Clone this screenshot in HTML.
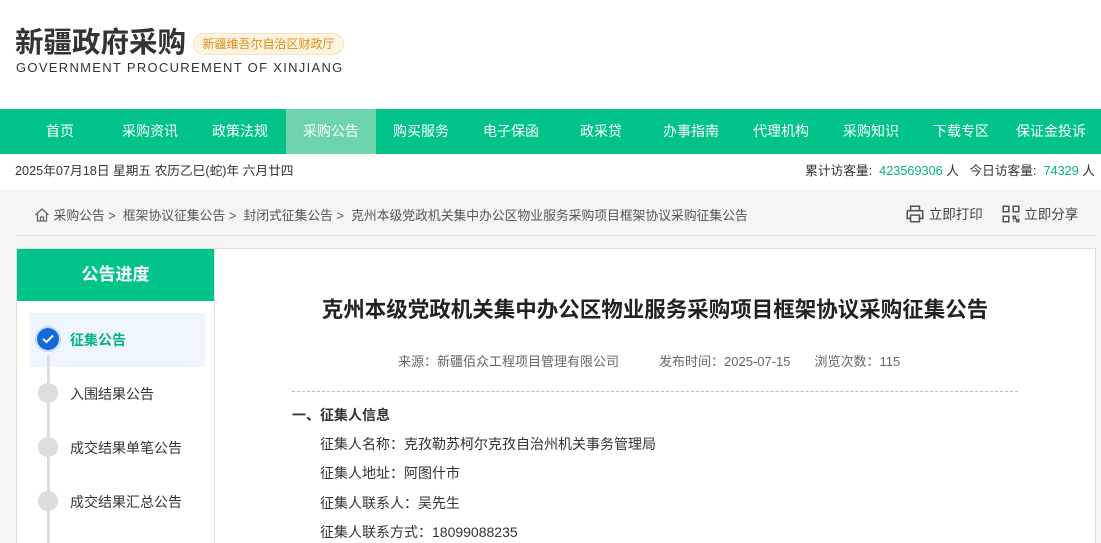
<!DOCTYPE html>
<html style="width:1101px;height:543px;overflow:hidden"><head><meta charset="utf-8"><style>
*{margin:0;padding:0;box-sizing:border-box}
body{width:1101px;height:543px;overflow:hidden;background:#f5f5f5;font-family:"Liberation Sans","Noto Sans CJK SC",sans-serif;color:#333;position:relative}
.abs{position:absolute}
.hdr{left:0;top:0;width:1101px;height:109px;background:#fff}
.nav{left:0;top:109px;width:1101px;height:45px;background:#02c389}
.nav span{position:absolute;top:0;height:45px;line-height:45px;width:90px;text-align:center;color:#fff;font-size:14px}
.date{left:0;top:154px;width:1101px;height:36px;background:#fff;font-size:12.7px;line-height:34px}
.g{color:#02b37e}
</style></head><body>
<div class="abs hdr">
 <div class="abs" style="left:15px;top:28px;font-size:28.5px;line-height:30px;font-weight:bold;color:#333">新疆政府采购</div>
 <div class="abs" style="left:193px;top:33px;width:151px;height:22px;border-radius:11px;background:#fdf3e1;border:1px solid #f6e2bd;color:#e08c18;font-size:12px;line-height:20px;text-align:center">新疆维吾尔自治区财政厅</div>
 <div class="abs" style="left:16px;top:60px;font-size:13px;line-height:15px;letter-spacing:1.3px;color:#333">GOVERNMENT PROCUREMENT OF XINJIANG</div>
</div>
<div class="abs nav">
 <span style="left:15px">首页</span><span style="left:105px">采购资讯</span><span style="left:195px">政策法规</span><span style="left:286px;background:#6ed4ae">采购公告</span><span style="left:376px">购买服务</span><span style="left:466px">电子保函</span><span style="left:556px">政采贷</span><span style="left:646px">办事指南</span><span style="left:736px">代理机构</span><span style="left:826px">采购知识</span><span style="left:916px">下载专区</span><span style="left:1006px">保证金投诉</span>
</div>
<div class="abs date">
 <span class="abs" style="left:15px">2025年07月18日 星期五 农历乙巳(蛇)年 六月廿四</span>
 <span class="abs" style="right:6px">累计访客量: <span class="g">&nbsp;423569306</span> 人 &nbsp;&nbsp;今日访客量: <span class="g">&nbsp;74329</span> 人</span>
</div>
<div class="abs" style="left:34px;top:205px;font-size:12.8px;color:#555">
 <svg width="16" height="16" viewBox="0 0 16 16" style="vertical-align:-3px"><path d="M1.5 8L8 2l6.5 6M3.5 6.5V14h9V6.5M6.5 14v-4h3v4" fill="none" stroke="#666" stroke-width="1.3"/></svg>
 采购公告 &gt; &nbsp;框架协议征集公告 &gt; &nbsp;封闭式征集公告 &gt; &nbsp;克州本级党政机关集中办公区物业服务采购项目框架协议采购征集公告</div>
<div class="abs" style="left:905px;top:203px;font-size:13.5px;color:#444">
 <svg width="20" height="20" viewBox="0 0 18 18" style="vertical-align:-5px"><path d="M5 6V2h8v4M3 6h12a1 1 0 011 1v6h-3M5 13H2V7a1 1 0 011-1M5 10h8v6H5z" fill="none" stroke="#555" stroke-width="1.4"/></svg> 立即打印
 <svg width="20" height="20" viewBox="0 0 18 18" style="vertical-align:-5px;margin-left:14px"><path d="M2 2h5v5H2zM11 2h5v5h-5zM2 11h5v5H2zM11 11h2v2h-2zM14 14h2v2h-2zM11 15h1M15 11h1" fill="none" stroke="#555" stroke-width="1.4"/></svg> 立即分享</div>
<div class="abs" style="left:16px;top:235px;width:1080px;height:1px;background:#ddd"></div>
<div class="abs" style="left:16px;top:248px;width:199px;height:295px;background:#fff;border:1px solid #ddd;border-bottom:none">
 <div style="height:52px;background:#02c389;color:#fff;font-size:17px;font-weight:bold;text-align:center;line-height:52px">公告进度</div>
 <div class="abs" style="left:12px;top:64px;width:176px;height:54px;background:#eef5ff"></div>
 <div class="abs" style="left:30px;top:106px;width:3px;height:189px;background:#ddd"></div>
 <div class="abs" style="left:20px;top:79px;width:22px;height:22px;border-radius:50%;background:#1769db;box-shadow:0 0 0 2px #c9dcf6"></div>
 <svg class="abs" style="left:25px;top:85px" width="12" height="10"><path d="M1 5l3.5 3L11 1.5" fill="none" stroke="#fff" stroke-width="2"/></svg>
 <div class="abs" style="left:53px;top:81px;font-size:14px;font-weight:bold;color:#02b37e">征集公告</div>
 <div class="abs" style="left:21px;top:134px;width:20px;height:20px;border-radius:50%;background:#ddd"></div>
 <div class="abs" style="left:53px;top:135px;font-size:14px">入围结果公告</div>
 <div class="abs" style="left:21px;top:188px;width:20px;height:20px;border-radius:50%;background:#ddd"></div>
 <div class="abs" style="left:53px;top:189px;font-size:14px">成交结果单笔公告</div>
 <div class="abs" style="left:21px;top:242px;width:20px;height:20px;border-radius:50%;background:#ddd"></div>
 <div class="abs" style="left:53px;top:243px;font-size:14px">成交结果汇总公告</div>
</div>
<div class="abs" style="left:214px;top:248px;width:882px;height:295px;background:#fff;border:1px solid #ddd;border-bottom:none">
 <div class="abs" style="left:0;width:880px;top:44px;text-align:center;font-size:21.5px;font-weight:bold;color:#222">克州本级党政机关集中办公区物业服务采购项目框架协议采购征集公告</div>
 <div class="abs" style="left:183px;top:102px;font-size:13px;color:#666">来源：新疆佰众工程项目管理有限公司<span style="margin-left:40px">发布时间：2025-07-15</span><span style="margin-left:24px">浏览次数：115</span></div>
 <div class="abs" style="left:77px;top:142px;width:726px;border-top:1px dashed #bbb"></div>
 <div class="abs" style="left:77px;top:152px;font-size:14px;line-height:29.2px;color:#333">
  <div style="font-weight:bold">一、征集人信息</div>
  <div style="padding-left:28px">征集人名称：克孜勒苏柯尔克孜自治州机关事务管理局</div>
  <div style="padding-left:28px">征集人地址：阿图什市</div>
  <div style="padding-left:28px">征集人联系人：吴先生</div>
  <div style="padding-left:28px">征集人联系方式：18099088235</div>
 </div>
</div>
</body></html>
